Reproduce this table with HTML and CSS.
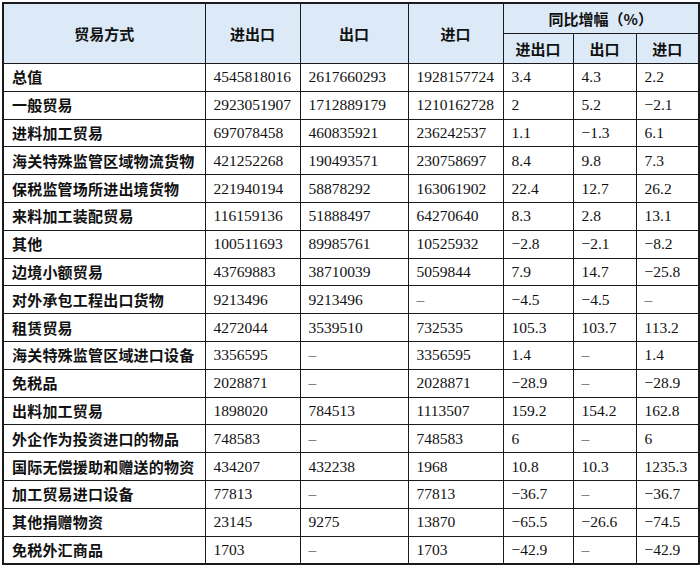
FILE: index.html
```html
<!DOCTYPE html>
<html lang="zh">
<head>
<meta charset="utf-8">
<title>贸易方式</title>
<link rel="stylesheet" href="styles.css">
</head>
<body>
<table class="trade">
  <colgroup>
    <col class="c-name"><col class="c-total"><col class="c-ex"><col class="c-im">
    <col class="c-p1"><col class="c-p2"><col class="c-p3">
  </colgroup>
  <thead>
    <tr class="h1">
      <th rowspan="2">贸易方式</th>
      <th rowspan="2">进出口</th>
      <th rowspan="2">出口</th>
      <th rowspan="2">进口</th>
      <th colspan="3">同比增幅（%）</th>
    </tr>
    <tr class="h2">
      <th>进出口</th>
      <th>出口</th>
      <th>进口</th>
    </tr>
  </thead>
  <tbody>
    <tr><td>总值</td><td>4545818016</td><td>2617660293</td><td>1928157724</td><td>3.4</td><td>4.3</td><td>2.2</td></tr>
    <tr><td>一般贸易</td><td>2923051907</td><td>1712889179</td><td>1210162728</td><td>2</td><td>5.2</td><td>−2.1</td></tr>
    <tr><td>进料加工贸易</td><td>697078458</td><td>460835921</td><td>236242537</td><td>1.1</td><td>−1.3</td><td>6.1</td></tr>
    <tr><td>海关特殊监管区域物流货物</td><td>421252268</td><td>190493571</td><td>230758697</td><td>8.4</td><td>9.8</td><td>7.3</td></tr>
    <tr><td>保税监管场所进出境货物</td><td>221940194</td><td>58878292</td><td>163061902</td><td>22.4</td><td>12.7</td><td>26.2</td></tr>
    <tr><td>来料加工装配贸易</td><td>116159136</td><td>51888497</td><td>64270640</td><td>8.3</td><td>2.8</td><td>13.1</td></tr>
    <tr><td>其他</td><td>100511693</td><td>89985761</td><td>10525932</td><td>−2.8</td><td>−2.1</td><td>−8.2</td></tr>
    <tr><td>边境小额贸易</td><td>43769883</td><td>38710039</td><td>5059844</td><td>7.9</td><td>14.7</td><td>−25.8</td></tr>
    <tr><td>对外承包工程出口货物</td><td>9213496</td><td>9213496</td><td>–</td><td>−4.5</td><td>−4.5</td><td>–</td></tr>
    <tr><td>租赁贸易</td><td>4272044</td><td>3539510</td><td>732535</td><td>105.3</td><td>103.7</td><td>113.2</td></tr>
    <tr><td>海关特殊监管区域进口设备</td><td>3356595</td><td>–</td><td>3356595</td><td>1.4</td><td>–</td><td>1.4</td></tr>
    <tr><td>免税品</td><td>2028871</td><td>–</td><td>2028871</td><td>−28.9</td><td>–</td><td>−28.9</td></tr>
    <tr><td>出料加工贸易</td><td>1898020</td><td>784513</td><td>1113507</td><td>159.2</td><td>154.2</td><td>162.8</td></tr>
    <tr><td>外企作为投资进口的物品</td><td>748583</td><td>–</td><td>748583</td><td>6</td><td>–</td><td>6</td></tr>
    <tr><td>国际无偿援助和赠送的物资</td><td>434207</td><td>432238</td><td>1968</td><td>10.8</td><td>10.3</td><td>1235.3</td></tr>
    <tr><td>加工贸易进口设备</td><td>77813</td><td>–</td><td>77813</td><td>−36.7</td><td>–</td><td>−36.7</td></tr>
    <tr><td>其他捐赠物资</td><td>23145</td><td>9275</td><td>13870</td><td>−65.5</td><td>−26.6</td><td>−74.5</td></tr>
    <tr><td>免税外汇商品</td><td>1703</td><td>–</td><td>1703</td><td>−42.9</td><td>–</td><td>−42.9</td></tr>
  </tbody>
</table>
</body>
</html>
```

FILE: styles.css
```css
html, body {
  margin: 0;
  padding: 0;
  background: #ffffff;
}
body {
  padding: 2px 0 0 2px;
}
.trade {
  border-collapse: collapse;
  table-layout: fixed;
  width: 696px;
  border: 2px solid #1a1a1a;
  color: #111;
  font-family: "Liberation Serif", "Noto Sans CJK SC", serif;
  font-size: 15.5px;
}
.c-name { width: 202px; }
.c-total { width: 95px; }
.c-ex { width: 108px; }
.c-im { width: 95px; }
.c-p1 { width: 70px; }
.c-p2 { width: 63px; }
.c-p3 { width: 63px; }

.trade th, .trade td {
  border: 1px solid #1a1a1a;
  padding: 0 0 0 8px;
  white-space: nowrap;
  overflow: hidden;
}
.trade th {
  background: #dce9f6;
  font-family: "Noto Sans CJK SC", sans-serif;
  font-weight: 700;
  font-size: 15px;
  text-align: center;
  padding: 0;
}
.h1 th, .h2 th { height: 29px; }
.trade tbody td {
  height: 26.8px;
  line-height: 18px;
  text-align: left;
}
.trade tbody td:first-child {
  font-family: "Noto Sans CJK SC", sans-serif;
  font-weight: 700;
  font-size: 15px;
  letter-spacing: 0.2px;
}
```
